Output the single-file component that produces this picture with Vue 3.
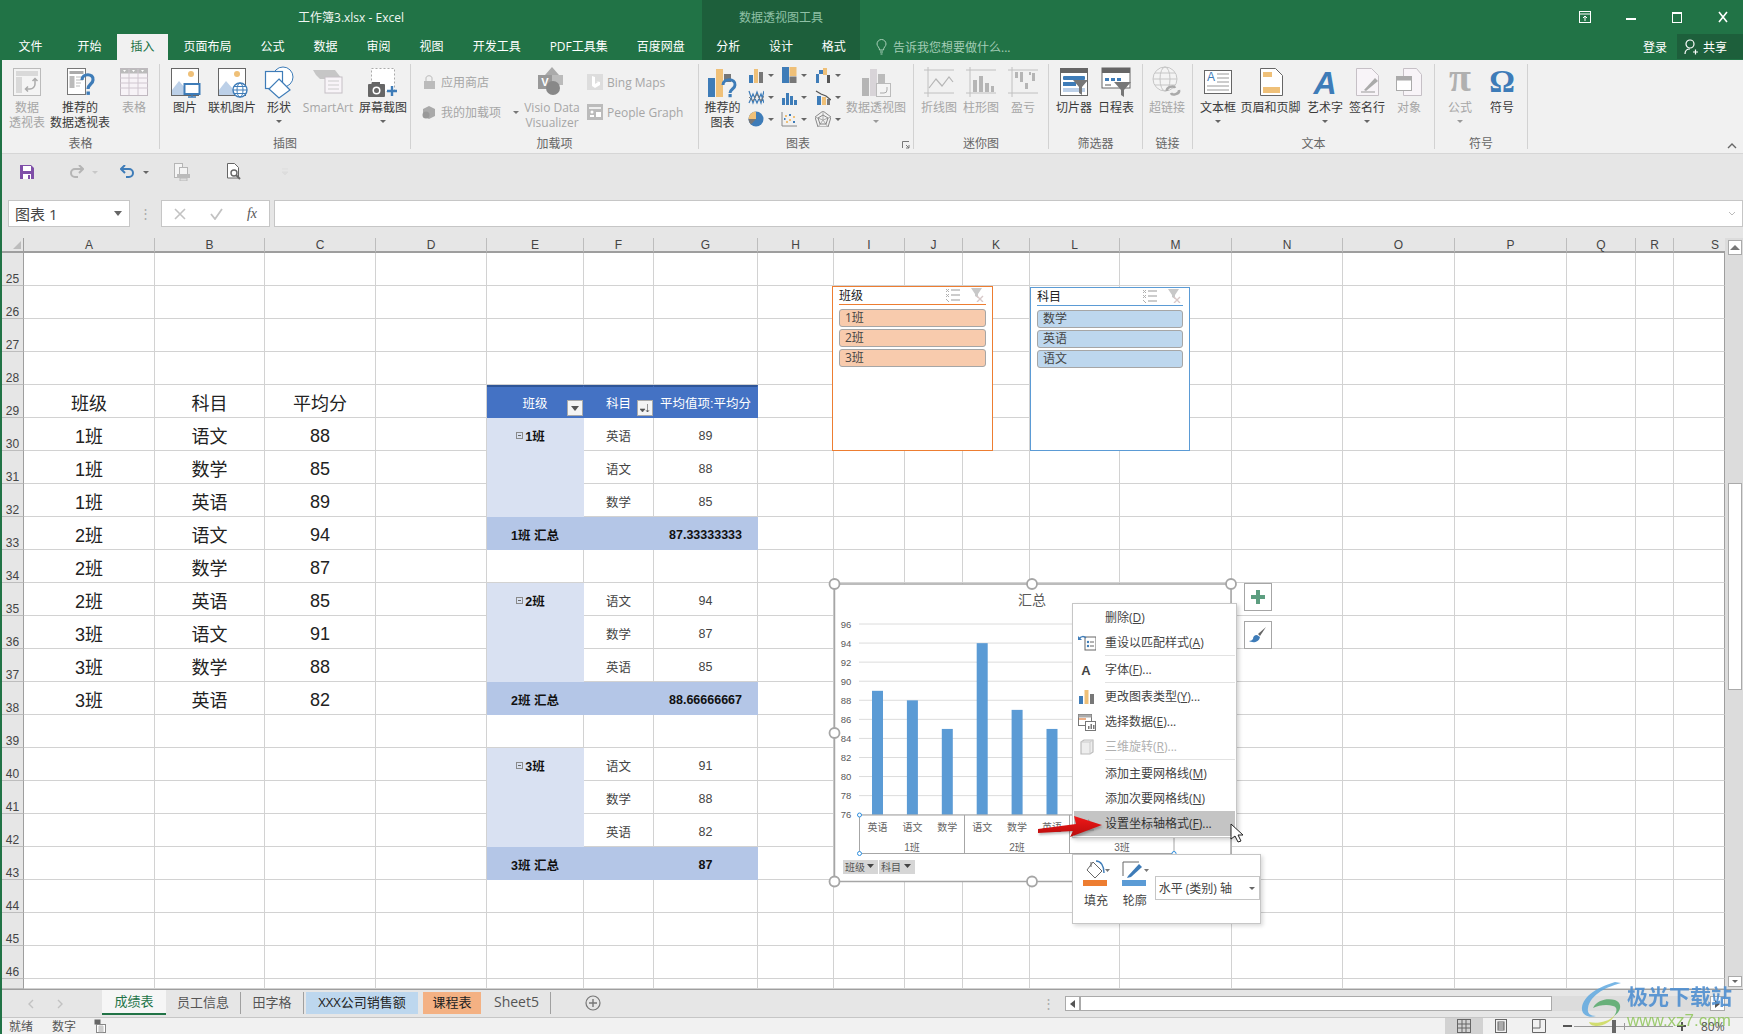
<script setup>
const mainTabs = [
  { t: '文件' }, { t: '开始', cls: 'second' }, { t: '插入', cls: 'active' }, { t: '页面布局' }, { t: '公式' },
  { t: '数据' }, { t: '审阅' }, { t: '视图' }, { t: '开发工具' }, { t: 'PDF工具集' }, { t: '百度网盘' }
]
const ctxTabs = ['分析', '设计', '格式']

const icons = {
  pivot: '<rect x="2.5" y="2.5" width="27" height="27" fill="#f4f4f4" stroke="#bbb"/><rect x="5" y="5" width="22" height="5" fill="#d9d9d9"/><rect x="5" y="11" width="6" height="16" fill="#d9d9d9"/><path d="M24 13v5a5 5 0 0 1-5 5h-4M21.500 15l2.500-2.500 2.500 2.500M17 20.500l-2.500 2.500 2.500 2.500" fill="none" stroke="#aaa" stroke-width="1.500"/>',
  rec: '<rect x="3.500" y="2.500" width="18" height="26" fill="#fff" stroke="#777"/><rect x="5.500" y="5" width="14" height="3" fill="#aaa"/><rect x="5.500" y="10" width="5" height="12" fill="#bbb"/><path d="M12 11h7M12 14h7M12 17h5M12 20h4" stroke="#bbb"/><path d="M18 14c0-7 12-7 11 0 0 4-5 4-5 9" fill="none" stroke="#3e7cb8" stroke-width="3.200"/><rect x="22.500" y="25.500" width="3.400" height="3.400" fill="#3e7cb8"/>',
  table: '<rect x="2.500" y="2.500" width="27" height="27" fill="#f7f3f7" stroke="#c0b8c0"/><rect x="2.500" y="2.500" width="27" height="5" fill="#bbb"/><path d="M2 12h28M2 17h28M2 22h28M11 3v26M20 3v26" stroke="#cfc6cf"/><path d="M5 4h3l-1.500 2zM14 4h3l-1.500 2zM23 4h3l-1.500 2z" fill="#fff"/>',
  picture: '<rect x="2.500" y="2.500" width="27" height="27" fill="#fff" stroke="#666"/><circle cx="22" cy="8" r="3" fill="#efc078"/><path d="M3 29v-5l7-9 7 8 4 6z" fill="#bcd0e8"/><rect x="15.500" y="18" width="15" height="10" fill="#fff" stroke="#3e7cb8" stroke-width="2"/><path d="M23 28v3M19 31h8" stroke="#3e7cb8" stroke-width="1.500"/>',
  online: '<rect x="2.500" y="2.500" width="27" height="27" fill="#fff" stroke="#666"/><circle cx="21" cy="8" r="3" fill="#efc078"/><path d="M3 29v-5l7-9 7 8 4 6z" fill="#bcd0e8"/><circle cx="24" cy="24" r="7" fill="#fff" stroke="#3e7cb8" stroke-width="1.400"/><ellipse cx="24" cy="24" rx="3" ry="7" fill="none" stroke="#3e7cb8"/><path d="M17 24h14M18 20.500h12M18 27.500h12" stroke="#3e7cb8"/>',
  shape: '<circle cx="20" cy="11" r="10" fill="#fff" stroke="#3e7cb8"/><rect x="2.500" y="5.500" width="17" height="17" fill="#fff" stroke="#3e7cb8" stroke-width="1.200"/><path d="M16 13l11 11-11 8-10-9z" fill="#fff" stroke="#3e7cb8" stroke-width="1.200"/>',
  smart: '<path d="M1 4h22l7 9H8l-4-4z" fill="#c6c6c6"/><rect x="13" y="11" width="17" height="16" fill="#f8f4f8" stroke="#c6c0c6"/><path d="M16 15h11M16 19h11M16 23h11" stroke="#ccc"/>',
  shot: '<rect x="4.500" y="2.500" width="23" height="23" fill="#fff" stroke="#aaa" stroke-dasharray="2 2"/><rect x="1" y="18" width="17" height="13" rx="1" fill="#666"/><rect x="5" y="16" width="8" height="3" fill="#666"/><circle cx="9.500" cy="24.500" r="4" fill="#fff"/><circle cx="9.500" cy="24.500" r="2.500" fill="#666"/><path d="M25 20v10M20 25h10" stroke="#3e7cb8" stroke-width="2.400"/>',
  visio: '<path d="M16 1l7 8v10l-7 8-7-8V9z" fill="#aaa"/><path d="M2 9h14v14H2z" fill="#999"/><path d="M16 9h11v10H16z" fill="#bbb"/><circle cx="17" cy="22" r="7" fill="#888"/><text x="9" y="20" font-size="11" font-weight="700" fill="#fff" text-anchor="middle" font-family="Liberation Sans">V</text>',
  chartrec: '<rect x="1" y="12" width="7" height="19" fill="#3e7cb8"/><rect x="9" y="3" width="7" height="28" fill="#efc078"/><rect x="17" y="8" width="7" height="8" fill="#777"/><path d="M16 19c0-7 13-7 12 0 0 4-5 4-5 8" fill="none" stroke="#3e7cb8" stroke-width="3"/><rect x="21.500" y="28" width="3.200" height="3.200" fill="#3e7cb8"/>',
  pivotchart: '<rect x="2" y="12" width="7" height="18" fill="#b5b5b5"/><rect x="10" y="3" width="7" height="27" fill="#d8d4d8"/><rect x="18" y="8" width="7" height="22" fill="#bbb"/><rect x="16.500" y="17.500" width="14" height="13" fill="#f4f4f4" stroke="#bbb"/><path d="M27 21v3a3 3 0 0 1-3 3h-4" fill="none" stroke="#aaa"/>',
  sline: '<path d="M1 4h30M1 27h30M5 1v30" stroke="#c0c0c0"/><path d="M6 22l7-9 6 7 7-9 4 5" fill="none" stroke="#b5b5b5" stroke-width="1.200"/>',
  scol: '<path d="M1 4h30M1 27h30M5 1v30" stroke="#c0c0c0"/><path d="M8 26V14h4v12zM14 26V10h4v16zM20 26V17h4v9zM26 26V20h3v6z" fill="#b5b5b5"/>',
  swin: '<path d="M1 4h30M1 27h30M5 1v30" stroke="#c0c0c0"/><path d="M8 6h3v6H8zM13 6h3v10h-3zM18 17h3v6h-3zM25 7h3v8h-3zM22 6h2v3h-2z" fill="#b5b5b5"/>',
  slicer: '<rect x="2.500" y="2.500" width="27" height="27" fill="#fff" stroke="#666"/><rect x="2" y="2" width="28" height="5" fill="#666"/><rect x="5" y="10" width="22" height="4" rx="1" fill="#3e7cb8"/><rect x="5" y="16" width="13" height="4" fill="#3e7cb8"/><rect x="5" y="22" width="22" height="4" fill="#bcd0e8"/><path d="M15 14h15l-6 7v8l-3-2v-6z" fill="#777"/>',
  timeline: '<rect x="2" y="2" width="28" height="20" fill="#fff" stroke="#666"/><rect x="2" y="2" width="28" height="5" fill="#666"/><path d="M5 12h4v3H5zM11 12h4v3h-4zM17 12h4v3h-4z" fill="#3e7cb8"/><path d="M5 18h6v2H5z" fill="#aaa"/><path d="M14 16h17l-7 8v7l-3-2v-5z" fill="#777"/>',
  link: '<circle cx="14" cy="13" r="12" fill="#f4f4f4" stroke="#c6c6c6"/><ellipse cx="14" cy="13" rx="5" ry="12" fill="none" stroke="#c6c6c6"/><path d="M2 13h24M4 7h20M4 19h20" stroke="#c6c6c6"/><path d="M16 25c-1-4 7-6 8-3M28 24c1 4-7 6-8 3" fill="none" stroke="#aaa" stroke-width="2.600"/>',
  textbox: '<rect x="2.500" y="4.500" width="27" height="23" fill="#fff" stroke="#666"/><text x="9" y="15" font-size="12" fill="#3e7cb8" text-anchor="middle" font-family="Liberation Sans">A</text><path d="M15 8h12M15 12h12M15 16h12M5 20h22M5 24h22" stroke="#999"/>',
  header: '<path d="M5.500 2.500h15l7 7v20h-22z" fill="#fff" stroke="#666"/><rect x="8" y="6" width="9" height="5" fill="#efc078"/><rect x="8" y="21" width="17" height="6" fill="#efc078"/>',
  art: '<text x="16" y="28" font-size="32" font-weight="700" font-style="italic" fill="#3e7cb8" text-anchor="middle" font-family="Liberation Sans">A</text>',
  sign: '<path d="M5.500 2.500h15l7 7v20h-22z" fill="#f8f4f8" stroke="#c6c0c6"/><path d="M10 26h14" stroke="#999"/><path d="M13 24l11-12 3 3-12 10z" fill="#aaa"/>',
  object: '<path d="M10.500 2.500h13l5 6v21h-18z" fill="#f8f4f8" stroke="#c6c0c6"/><rect x="3.500" y="10.500" width="15" height="14" fill="#fff" stroke="#aaa"/><rect x="3.500" y="10.500" width="15" height="4" fill="#aaa"/>',
  pi: '<text x="16" y="25" font-size="40" font-weight="700" fill="#b0b0b0" text-anchor="middle" font-family="Liberation Serif">π</text>',
  omega: '<text x="16" y="26" font-size="32" font-weight="700" fill="#3e7cb8" text-anchor="middle" font-family="Liberation Serif">Ω</text>',
  store: '<path d="M3 7h11v8H3z" fill="#bbb"/><path d="M5 7V4c0-3 6-3 6 0v3" fill="none" stroke="#bbb"/>',
  myadd: '<path d="M8 2l6 3v7l-6 3-6-3V5z" fill="#aaa"/><circle cx="5" cy="11" r="3.500" fill="#999"/>',
  bing: '<rect x="0" y="0" width="16" height="16" fill="#ddd"/><path d="M5 2l3 1v7l3-2-2-1 4 1v3l-5 3-3-2z" fill="#fff"/>',
  people: '<rect x="0" y="0" width="16" height="16" fill="#bbb"/><path d="M2 3h12v2H2z" fill="#eee"/><circle cx="5" cy="8" r="1.500" fill="#fff"/><path d="M3 13v-2h4v2zM9 8h5v5H9z" fill="#fff"/>',
  c_col: '<path d="M1 8h4v8H1z" fill="#3e7cb8"/><path d="M6 2h4v14H6z" fill="#efc078"/><path d="M11 5h4v11h-4z" fill="#777"/>',
  c_hier: '<rect x="1" y="0" width="7" height="16" fill="#3e7cb8"/><rect x="8.500" y="0" width="7" height="9" fill="#efc078"/><rect x="8.500" y="9.500" width="7" height="6.500" fill="#777"/>',
  c_water: '<path d="M1 16V7h3v9z" fill="#3e7cb8"/><path d="M4 7V3h4v4z" fill="#3e7cb8"/><path d="M8 1h4v7H8z" fill="#efc078"/><path d="M12 8h3v8h-3z" fill="#555"/>',
  c_line: '<path d="M1 2l4 12 4-11 4 11 3-12M1 14l4-9 4 9 4-9 3 9" fill="none" stroke="#3e7cb8" stroke-width="1.200"/><path d="M1 8l4 4 4-7 4 7 3-5" fill="none" stroke="#777"/>',
  c_stat: '<path d="M1 9h3v7H1zM5 4h3v12H5zM9 7h3v9H9zM13 11h3v5h-3z" fill="#3e7cb8"/>',
  c_combo: '<path d="M2 7h4v9H2z" fill="#3e7cb8"/><path d="M7 8h4v8H7z" fill="#efc078"/><path d="M12 10h3v6h-3z" fill="#777"/><path d="M1 2l5 3 5 2 5 4" fill="none" stroke="#555" stroke-width="1.200"/>',
  c_pie: '<circle cx="8" cy="8" r="7.500" fill="#3e7cb8"/><path d="M8 8H0.500A7.500 7.500 0 0 1 8 0.500z" fill="#efc078"/><path d="M8 8H0.500A7.500 7.500 0 0 0 3 13.500z" fill="#777"/>',
  c_scatter: '<path d="M1 1v14h15" fill="none" stroke="#888"/><path d="M4 4h2v2H4zM8 8h2v2H8zM12 5h2v2h-2zM5 10h2v2H5z" fill="#efc078"/><path d="M8 3h2v2H8zM12 10h2v2h-2zM3 7h1.500v2H3z" fill="#3e7cb8"/>',
  c_radar: '<path d="M8 0l8 6-3 10H3L0 6z" fill="none" stroke="#888"/><path d="M8 0v9M0 6l8 3 8-3M3 16l5-7 5 7" stroke="#aaa" fill="none"/><path d="M8 4l5 3-2 6H5L3 7z" fill="none" stroke="#888"/>',
  m_reset: '<rect x="7" y="3" width="11" height="13" fill="#fff" stroke="#666"/><circle cx="10" cy="8" r="1.200" fill="#3e7cb8"/><circle cx="10" cy="12" r="1.200" fill="#3e7cb8"/><path d="M12 8h4M12 12h4" stroke="#666"/><path d="M1 5c2-3 5-3 7-1" fill="none" stroke="#3e7cb8" stroke-width="1.500"/><path d="M0 2v4h4z" fill="#3e7cb8"/>',
  m_font: '<text x="8" y="14" font-size="13" fill="#444" text-anchor="middle" font-family="Liberation Sans" font-weight="700">A</text>',
  m_type: '<rect x="1" y="8" width="4" height="8" fill="#3e7cb8"/><rect x="6.500" y="2" width="4" height="14" fill="#efc078"/><rect x="12" y="6" width="4" height="10" fill="#777"/>',
  m_data: '<rect x="0.500" y="1.500" width="13" height="11" fill="#fff" stroke="#777"/><rect x="0.500" y="1.500" width="13" height="3" fill="#aaa"/><path d="M1 6h7" stroke="#e07b39" stroke-width="1.200"/><rect x="7.500" y="8.500" width="10" height="9" fill="#fff" stroke="#777"/><path d="M10 16v-3h1.500v3zM12.500 16v-5H14v5zM15 16v-4h1.500v4z" fill="#777"/>',
  m_3d: '<path d="M3 4l3-2h9v12l-3 2H3z" fill="#eee" stroke="#bbb" stroke-width="1.200"/><path d="M3 4h9v12M12 4l3-2" fill="none" stroke="#ccc"/>',
  m_axis: '<path d="M5 15V6l2-2v11zM10 15V4l2 2v9z" fill="#999"/><path d="M2 15h14" stroke="#999"/>'
}

const groups = [
  { label: '表格', w: 158, items: [
    { icon: 'pivot', w: 50, lines: ['数据', '透视表'], dis: true },
    { icon: 'rec', w: 56, lines: ['推荐的', '数据透视表'] },
    { icon: 'table', w: 52, lines: ['表格'], dis: true }
  ] },
  { label: '插图', w: 251, items: [
    { icon: 'picture', w: 50, lines: ['图片'] },
    { icon: 'online', w: 44, lines: ['联机图片'] },
    { icon: 'shape', w: 50, lines: ['形状'], caret: true },
    { icon: 'smart', w: 48, lines: ['SmartArt'], dis: true },
    { icon: 'shot', w: 62, lines: ['屏幕截图'], caret: true }
  ] },
  { label: '加载项', w: 288, pad: 10, items: [
    { kind: 'rows', w: 106, rows: [
      { icon: 'store', t: '应用商店' },
      { icon: 'myadd', t: '我的加载项', caret: true }
    ] },
    { icon: 'visio', w: 50, lines: ['Visio Data', 'Visualizer'], dis: true },
    { kind: 'rows', w: 110, ml: 10, rows: [
      { icon: 'bing', t: 'Bing Maps' },
      { icon: 'people', t: 'People Graph' }
    ] }
  ] },
  { label: '图表', w: 215, lr: 16, launcher: true, items: [
    { icon: 'chartrec', w: 47, lines: ['推荐的', '图表'] },
    { kind: 'grid', cells: ['c_col', 'c_hier', 'c_water', 'c_line', 'c_stat', 'c_combo', 'c_pie', 'c_scatter', 'c_radar'] },
    { icon: 'pivotchart', w: 60, lines: ['数据透视图'], caret: true, dis: true }
  ] },
  { label: '迷你图', w: 135, pad: 4, items: [
    { icon: 'sline', w: 42, lines: ['折线图'], dis: true },
    { icon: 'scol', w: 42, lines: ['柱形图'], dis: true },
    { icon: 'swin', w: 42, lines: ['盈亏'], dis: true }
  ] },
  { label: '筛选器', w: 94, pad: 4, items: [
    { icon: 'slicer', w: 42, lines: ['切片器'] },
    { icon: 'timeline', w: 42, lines: ['日程表'] }
  ] },
  { label: '链接', w: 50, items: [{ icon: 'link', w: 48, lines: ['超链接'], dis: true }] },
  { label: '文本', w: 242, items: [
    { icon: 'textbox', w: 50, lines: ['文本框'], caret: true },
    { icon: 'header', w: 55, lines: ['页眉和页脚'] },
    { icon: 'art', w: 54, lines: ['艺术字'], caret: true },
    { icon: 'sign', w: 30, lines: ['签名行'], caret: true },
    { icon: 'object', w: 54, lines: ['对象'], dis: true }
  ] },
  { label: '符号', w: 93, pad: 4, items: [
    { icon: 'pi', w: 42, lines: ['公式'], caret: true, dis: true },
    { icon: 'omega', w: 42, lines: ['符号'] }
  ] }
]

const columns = [
  ['A', 131], ['B', 110], ['C', 111], ['D', 111], ['E', 97], ['F', 70], ['G', 104], ['H', 76], ['I', 71], ['J', 58],
  ['K', 67], ['L', 90], ['M', 112], ['N', 111], ['O', 112], ['P', 112], ['Q', 69], ['R', 38], ['S', 51]
]
const gridStyle = {
  gridTemplateColumns: '22px ' + columns.map((c) => c[1] + 'px').join(' '),
  gridTemplateRows: '15px repeat(22, 33px) 10px'
}

const source = [
  ['1班', '语文', '88'], ['1班', '数学', '85'], ['1班', '英语', '89'],
  ['2班', '语文', '94'], ['2班', '数学', '87'], ['2班', '英语', '85'],
  ['3班', '语文', '91'], ['3班', '数学', '88'], ['3班', '英语', '82']
]
const cellMap = {}
function put(row, col, text, cls, extra) {
  const num = /^[\d.]+$/.test(text) ? ' num' : ''
  cellMap[row + col] = { text, cls: cls + num, ...extra }
}
put(29, 'A', '班级', 'big'); put(29, 'B', '科目', 'big'); put(29, 'C', '平均分', 'big')
source.forEach((r, i) => {
  put(30 + i, 'A', r[0], 'big'); put(30 + i, 'B', r[1], 'big'); put(30 + i, 'C', r[2], 'big')
})
put(29, 'E', '班级', 'phead', { dd: 'filter' })
put(29, 'F', '科目', 'phead', { dd: 'sort' })
put(29, 'G', '平均值项:平均分', 'phead')
const pivot = [
  { start: 30, name: '1班', rows: [['英语', '89'], ['语文', '88'], ['数学', '85']], avg: '87.33333333' },
  { start: 35, name: '2班', rows: [['语文', '94'], ['数学', '87'], ['英语', '85']], avg: '88.66666667' },
  { start: 40, name: '3班', rows: [['语文', '91'], ['数学', '88'], ['英语', '82']], avg: '87' }
]
pivot.forEach((p) => {
  p.rows.forEach((r, i) => {
    put(p.start + i, 'E', i === 0 ? p.name : '', 'prow', { minus: i === 0 })
    put(p.start + i, 'F', r[0], 'pdata')
    put(p.start + i, 'G', r[1], 'pdata')
  })
  const s = p.start + 3
  put(s, 'E', p.name + ' 汇总', 'psub')
  put(s, 'F', '', 'psub')
  put(s, 'G', p.avg, 'psub')
})
const rows = []
for (let r = 25; r <= 47; r++) rows.push(r)
function cell(r, c) { return cellMap[r + c] || { text: '', cls: '' } }

const slicers = [
  { cls: 's1', title: '班级', items: ['1班', '2班', '3班'] },
  { cls: 's2', title: '科目', items: ['数学', '英语', '语文'] }
]

const yAxis = [96, 94, 92, 90, 88, 86, 84, 82, 80, 78, 76].map((v, i) => ({ v, y: 624 + i * 19.07 }))
const bars = [
  { v: 89, t: '英语' }, { v: 88, t: '语文' }, { v: 85, t: '数学' }, { v: 94, t: '语文' }, { v: 87, t: '数学' },
  { v: 85, t: '英语' }, { v: 91 }, { v: 88 }, { v: 82 }
].map((b, i) => ({ ...b, x: 872 + i * 34.9, h: (b.v - 76) * 9.53 }))
const handles = [[834.5, 584], [1032, 584], [1231, 584], [834.5, 733], [834.5, 881.5], [1032, 881.5]]
const axisGroups = [{ t: '1班', x: 912 }, { t: '2班', x: 1017 }, { t: '3班', x: 1122 }]

const menu = [
  { t: '删除', k: 'D' },
  { t: '重设以匹配样式', k: 'A', icon: 'm_reset' },
  { sep: true },
  { t: '字体', k: 'F', more: true, icon: 'm_font' },
  { sep: true },
  { t: '更改图表类型', k: 'Y', more: true, icon: 'm_type' },
  { t: '选择数据', k: 'E', more: true, icon: 'm_data' },
  { t: '三维旋转', k: 'R', more: true, icon: 'm_3d', dis: true },
  { sep: true },
  { t: '添加主要网格线', k: 'M' },
  { t: '添加次要网格线', k: 'N' },
  { t: '设置坐标轴格式', k: 'F', more: true, icon: 'm_axis', hot: true }
]

const sheetTabs = [
  { t: '成绩表', w: 64, cls: 'on' },
  { t: '员工信息', w: 75, cls: 'sep' },
  { t: '田字格', w: 63, cls: 'sep' },
  { t: 'XXX公司销售额', w: 112, cls: 'blue', ml: 2 },
  { t: '课程表', w: 58, cls: 'orange', ml: 5 },
  { t: 'Sheet5', w: 68, cls: 'sep latin', ml: 2 }
]
</script>

<template>
  <div class="app">
    <header class="hdr">
      <div class="hleft">
        <div class="title">工作簿3.xlsx - Excel</div>
        <nav class="tabs">
          <span v-for="t in mainTabs" :key="t.t" class="tab" :class="t.cls">{{ t.t }}</span>
        </nav>
      </div>
      <div class="hctx">
        <div class="ctx-title">数据透视图工具</div>
        <nav class="tabs ctx-tabs">
          <span v-for="t in ctxTabs" :key="t" class="ctab">{{ t }}</span>
        </nav>
      </div>
      <div class="hright">
        <div class="winbtns">
          <svg width="12" height="14" viewBox="0 0 12 14"><rect x="0.500" y="1.500" width="11" height="11" fill="none" stroke="#fff"/><path d="M0 4h12M6 11V6M4 8l2-2 2 2" fill="none" stroke="#fff"/></svg>
          <svg width="12" height="14" viewBox="0 0 12 14"><path d="M1 9h10" stroke="#fff" stroke-width="2"/></svg>
          <svg width="12" height="14" viewBox="0 0 12 14"><rect x="1.500" y="2.500" width="9" height="10" fill="none" stroke="#fff"/><path d="M1 3h10" stroke="#fff" stroke-width="2"/></svg>
          <svg width="12" height="14" viewBox="0 0 12 14"><path d="M2 2l8 10M10 2l-8 10" stroke="#fff" stroke-width="1.600"/></svg>
        </div>
        <div class="tellrow">
          <svg class="bulb" width="11" height="16" viewBox="0 0 11 16"><path d="M3.500 11c0-3-2.500-3.500-2.500-6a4.500 4.500 0 0 1 9 0c0 2.500-2.500 3-2.500 6z" fill="none" stroke="#a9d0b9"/><path d="M4 13h3M4.500 15h2" stroke="#a9d0b9"/></svg>
          <span class="tell">告诉我您想要做什么...</span>
          <span class="login">登录</span>
          <span class="share">
            <svg width="14" height="16" viewBox="0 0 14 16"><circle cx="6" cy="5" r="4" fill="none" stroke="#fff" stroke-width="1.200"/><path d="M1 15c0-3 2-5 5-5M9 13h5M11.500 10.500v5" fill="none" stroke="#fff" stroke-width="1.200"/></svg>
            共享
          </span>
        </div>
      </div>
    </header>

    <div class="ribbon">
      <section v-for="g in groups" :key="g.label" class="rgroup" :style="{ width: g.w + 'px', paddingLeft: (g.pad || 0) + 'px' }">
        <div class="rbody">
          <template v-for="(it, i) in g.items" :key="i">
            <div v-if="it.kind === 'rows'" class="rows" :style="{ width: it.w + 'px', marginLeft: (it.ml || 0) + 'px' }">
              <div v-for="r in it.rows" :key="r.t" class="srow">
                <svg width="16" height="16" viewBox="0 0 16 16" v-html="icons[r.icon]"></svg>
                <span>{{ r.t }}</span>
                <i v-if="r.caret" class="caret caret-row"></i>
              </div>
            </div>
            <div v-else-if="it.kind === 'grid'" class="cgrid">
              <div v-for="c in it.cells" :key="c" class="ccell">
                <svg width="16" height="16" viewBox="0 0 16 16" v-html="icons[c]"></svg>
                <i class="caret dark"></i>
              </div>
            </div>
            <div v-else class="rbtn" :class="{ dis: it.dis }" :style="{ width: it.w + 'px' }">
              <svg width="32" height="32" viewBox="0 0 32 32" v-html="icons[it.icon]"></svg>
              <span v-for="l in it.lines" :key="l" class="rline">{{ l }}</span>
              <i v-if="it.caret" class="caret big"></i>
            </div>
          </template>
        </div>
        <div class="rlabel" :style="{ marginLeft: -(g.pad || 0) + 'px', paddingRight: (g.lr || 0) + 'px' }">
          {{ g.label }}
          <svg v-if="g.launcher" class="launcher" width="8" height="8" viewBox="0 0 8 8"><path d="M0.500 7V0.500H7M4 4l3 3M7 4v3H4" fill="none" stroke="#777"/></svg>
        </div>
      </section>
      <svg class="collapse" width="10" height="7" viewBox="0 0 10 7"><path d="M1 6l4-4 4 4" fill="none" stroke="#666" stroke-width="1.400"/></svg>
    </div>

    <div class="qat">
      <svg class="q1" width="16" height="16" viewBox="0 0 16 16"><path d="M1 1h11l3 3v11H1z" fill="#7f4fa8"/><rect x="4" y="2" width="8" height="5" fill="#fff"/><rect x="4" y="10" width="8" height="5" fill="#fff"/><rect x="9" y="11" width="2" height="4" fill="#7f4fa8"/></svg>
      <svg class="q2" width="15" height="14" viewBox="0 0 15 14"><path d="M14 4H6a4 4 0 0 0 0 8h3M10 0l4 4-4 4" fill="none" stroke="#b5b5b5" stroke-width="2"/></svg>
      <i class="caret faint q-c"></i>
      <svg class="q3" width="15" height="14" viewBox="0 0 15 14"><path d="M1 4h8a4 4 0 0 1 0 8H6M5 0L1 4l4 4" fill="none" stroke="#3e7cb8" stroke-width="2"/></svg>
      <i class="caret q-c dark"></i>
      <svg class="q4" width="16" height="18" viewBox="0 0 16 18"><rect x="0.500" y="0.500" width="8" height="14" fill="#f4f4f4" stroke="#b5b5b5"/><rect x="5.500" y="4.500" width="8" height="10" fill="#f4f4f4" stroke="#b5b5b5"/><rect x="3" y="11" width="13" height="4" fill="#bbb"/><rect x="6" y="15" width="7" height="3" fill="#ddd" stroke="#bbb"/></svg>
      <svg class="q5" width="15" height="18" viewBox="0 0 15 18"><path d="M0.500 0.500h7l4 4V15h-11z" fill="#fff" stroke="#666"/><circle cx="7" cy="10" r="3" fill="#fff" stroke="#666" stroke-width="1.400"/><path d="M9 12l4 4" stroke="#666" stroke-width="2"/></svg>
      <svg class="q6" width="8" height="8" viewBox="0 0 8 8"><path d="M1 1h6M1 4h6l-3 3z" fill="#ddd" stroke="#ddd"/></svg>
    </div>

    <div class="fbar">
      <div class="namebox"><span>图表 1</span><i class="caret dark nb-c"></i></div>
      <div class="fdots">⋮</div>
      <div class="fbtns">
        <svg width="12" height="12" viewBox="0 0 12 12"><path d="M1 1l10 10M11 1L1 11" stroke="#c2c2c2" stroke-width="1.600"/></svg>
        <svg width="13" height="12" viewBox="0 0 13 12"><path d="M1 6l4 5 7-10" fill="none" stroke="#c2c2c2" stroke-width="1.800"/></svg>
        <span class="fx">fx</span>
      </div>
      <div class="finput"><svg width="8" height="6" viewBox="0 0 8 6"><path d="M1 1l3 3 3-3" fill="none" stroke="#bbb"/></svg></div>
    </div>

    <div class="wrap">
      <div class="sheet" :style="gridStyle">
        <div class="corner"><svg width="10" height="10" viewBox="0 0 10 10"><path d="M9 1v8H1z" fill="#bdbdbd"/></svg></div>
        <div v-for="c in columns" :key="c[0]" class="chead">{{ c[0] }}</div>
        <template v-for="r in rows" :key="r">
          <div class="rhead">{{ r < 47 ? r : '' }}</div>
          <div v-for="c in columns" :key="c[0]" class="cell" :class="cell(r, c[0]).cls">
            <svg v-if="cell(r, c[0]).minus" class="minus" width="7" height="7" viewBox="0 0 7 7"><rect x="0.500" y="0.500" width="6" height="6" fill="none" stroke="#8a8a8a"/><path d="M2 3.500h3" stroke="#666"/></svg>
            {{ cell(r, c[0]).text }}
            <span v-if="cell(r, c[0]).dd" class="dd">
              <svg v-if="cell(r, c[0]).dd === 'filter'" width="8" height="5" viewBox="0 0 8 5"><path d="M0 0h8L4 5z" fill="#555"/></svg>
              <svg v-else width="11" height="11" viewBox="0 0 11 11"><path d="M0 6h5L2.500 9zM7.500 1v8M6 7.500l1.500 1.500L9 7.500" fill="#555" stroke="#555" stroke-width="0.600"/></svg>
            </span>
          </div>
        </template>
      </div>
      <div class="vbar">
        <div class="vbtn"><i class="caret up"></i></div>
        <div class="vthumb"></div>
        <div class="vbtn last"><i class="caret dark"></i></div>
      </div>
    </div>

    <div class="tabbar">
      <div class="nav">
        <svg width="6" height="10" viewBox="0 0 6 10"><path d="M5 1L1 5l4 4" fill="none" stroke="#c2c2c2" stroke-width="1.400"/></svg>
        <svg width="6" height="10" viewBox="0 0 6 10"><path d="M1 1l4 4-4 4" fill="none" stroke="#c2c2c2" stroke-width="1.400"/></svg>
      </div>
      <div v-for="t in sheetTabs" :key="t.t" class="stab" :class="t.cls" :style="{ width: t.w + 'px', marginLeft: (t.ml || 0) + 'px' }">{{ t.t }}</div>
      <svg class="addsheet" width="16" height="16" viewBox="0 0 16 16"><circle cx="8" cy="8" r="7" fill="none" stroke="#777" stroke-width="1.200"/><path d="M4 8h8M8 4v8" stroke="#777" stroke-width="1.400"/></svg>
      <div class="hdots">⋮</div>
      <div class="hbar">
        <div class="hbtn"><svg width="5" height="8" viewBox="0 0 5 8"><path d="M5 0v8L0 4z" fill="#555"/></svg></div>
        <div class="hthumb"></div>
        <div class="hbtn end"><svg width="5" height="8" viewBox="0 0 5 8"><path d="M0 0v8l5-4z" fill="#555"/></svg></div>
      </div>
    </div>

    <footer class="status">
      <span class="st1">就绪</span>
      <span class="st2">数字</span>
      <svg class="st3" width="12" height="14" viewBox="0 0 12 14"><rect x="0.500" y="0.500" width="6" height="5" fill="#666"/><rect x="2.500" y="5.500" width="9" height="8" fill="#fff" stroke="#888"/><path d="M4 8h6M4 10h6M4 12h6M6 6v8M8 6v8" stroke="#aaa" stroke-width="0.700"/></svg>
      <div class="views">
        <div class="view on"><svg width="14" height="14" viewBox="0 0 14 14"><rect x="0.500" y="0.500" width="13" height="13" fill="none" stroke="#666"/><path d="M5 0v14M9 0v14M0 5h14M0 9h14" stroke="#666"/></svg></div>
        <div class="view"><svg width="12" height="14" viewBox="0 0 12 14"><rect x="0.500" y="0.500" width="11" height="13" fill="none" stroke="#666"/><rect x="3" y="3" width="6" height="8" fill="none" stroke="#666"/><path d="M3 5h6M3 7h6M3 9h6" stroke="#666"/></svg></div>
        <div class="view"><svg width="14" height="14" viewBox="0 0 14 14"><path d="M0.500 13.500V0.500h13v13zM0 9h8V0" fill="none" stroke="#666"/></svg></div>
      </div>
      <div class="zoom">
        <span class="zm"></span>
        <div class="ztrack"><i class="ztick"></i><i class="zthumb"></i></div>
        <span class="zp"></span>
      </div>
      <span class="zpct">80%</span>
    </footer>

    <aside v-for="s in slicers" :key="s.cls" class="slicer" :class="s.cls">
      <div class="shead">
        <span>{{ s.title }}</span>
        <svg width="14" height="14" viewBox="0 0 14 14"><path d="M5 2h9M5 7h9M5 12h9" stroke="#9a9a9a" stroke-width="1.200"/><path d="M0 1l3 3M3 1L0 4M0 6l3 3M3 6L0 9M0 11l3 3" stroke="#b0b0b0"/></svg>
        <svg width="14" height="14" viewBox="0 0 14 14"><path d="M1 0h11L8 6v4L5 8V6z" fill="#c8c8c8"/><path d="M7 8l6 6M13 8l-6 6" stroke="#d8c8c8" stroke-width="1.400"/></svg>
      </div>
      <div v-for="it in s.items" :key="it" class="sitem">{{ it }}</div>
    </aside>

    <svg class="chart" width="414" height="314" viewBox="826 576 414 314">
      <rect x="834.500" y="584" width="396.500" height="297.500" fill="#fff" stroke="#a6a6a6" stroke-width="1.500"/>
      <text x="1032" y="605" font-size="14" fill="#595959" text-anchor="middle" class="ctext">汇总</text>
      <g v-for="t in yAxis" :key="t.v">
        <line x1="859" :y1="t.y" x2="1215" :y2="t.y" stroke="#dcdcdc"/>
        <text x="846" :y="t.y + 3.500" font-size="9.500" fill="#595959" text-anchor="middle" class="ctext">{{ t.v }}</text>
      </g>
      <g v-for="b in bars" :key="b.x">
        <rect :x="b.x" :y="814.700 - b.h" width="11" :height="b.h" fill="#5b9bd5"/>
        <text v-if="b.t" :x="b.x + 5.500" y="831" font-size="10" fill="#666" text-anchor="middle" class="ctext">{{ b.t }}</text>
      </g>
      <path d="M859.500 815V853.500H1174V838M859.500 815H1174M964.500 815V853.500M1069.500 815V853.500" fill="none" stroke="#a6a6a6"/>
      <text v-for="g in axisGroups" :key="g.t" :x="g.x" y="851" font-size="10" fill="#666" text-anchor="middle" class="ctext">{{ g.t }}</text>
      <circle cx="859.500" cy="815" r="2" fill="#fff" stroke="#2e8fe0"/>
      <circle cx="859.500" cy="853.500" r="2" fill="#fff" stroke="#2e8fe0"/>
      <circle cx="1174" cy="853.500" r="2" fill="#fff" stroke="#2e8fe0"/>
      <g>
        <rect x="843" y="860" width="35" height="14" fill="#d6d6d6"/>
        <rect x="879" y="860" width="36" height="14" fill="#d6d6d6"/>
        <text x="855" y="871" font-size="10" fill="#555" text-anchor="middle" class="ctext">班级</text>
        <text x="891" y="871" font-size="10" fill="#555" text-anchor="middle" class="ctext">科目</text>
        <path d="M867 864h7l-3.500 4zM904 864h7l-3.500 4z" fill="#444"/>
      </g>
      <circle v-for="h in handles" :key="h[0] + '-' + h[1]" :cx="h[0]" :cy="h[1]" r="5" fill="#fff" stroke="#a6a6a6" stroke-width="1.800"/>
    </svg>

    <div class="sidebtn plus">
      <svg width="14" height="14" viewBox="0 0 14 14"><path d="M0 5h5V0h4v5h5v4H9v5H5V9H0z" fill="#5d9e80"/></svg>
    </div>
    <div class="sidebtn brush">
      <svg width="18" height="18" viewBox="0 0 18 18"><path d="M17 1L9 8l2 2z" fill="#666"/><path d="M8 9c-3 0-4 2-4 4-1 1-2 2-4 2 3 2 10 2 11-4z" fill="#3e7cb8"/></svg>
    </div>

    <div class="menu">
      <template v-for="(m, i) in menu" :key="i">
        <div v-if="m.sep" class="msep"></div>
        <div v-else class="mitem" :class="{ hot: m.hot, dis: m.dis }">
          <svg class="micon" width="18" height="18" viewBox="0 0 18 18" v-html="m.icon ? icons[m.icon] : ''"></svg>
          <span class="mtext">{{ m.t }}(<u>{{ m.k }}</u>){{ m.more ? '...' : '' }}</span>
        </div>
      </template>
    </div>

    <div class="mini">
      <div class="mcol">
        <svg width="28" height="26" viewBox="0 0 28 26"><path d="M10 2l9 9-7 7-8-8z" fill="#fff" stroke="#666"/><path d="M8 7V2" stroke="#666"/><path d="M13 1c5 0 8 5 8 12" fill="none" stroke="#3e7cb8" stroke-width="1.400"/><rect x="0" y="20" width="24" height="6" fill="#ed7d31"/><path d="M22 9h5l-2.500 3z" fill="#777"/></svg>
        <span>填充</span>
      </div>
      <div class="mcol">
        <svg width="28" height="26" viewBox="0 0 28 26"><path d="M1 16V2h16" fill="none" stroke="#666"/><path d="M6 16L17 4l3 3L9 17l-4 1z" fill="#3e7cb8"/><rect x="0" y="20" width="24" height="6" fill="#5b9bd5"/><path d="M22 9h5l-2.500 3z" fill="#777"/></svg>
        <span>轮廓</span>
      </div>
      <div class="msel"><span>水平 (类别) 轴</span><i class="caret dark"></i></div>
    </div>

    <svg class="arrow" width="72" height="30" viewBox="0 0 72 30">
      <defs>
        <linearGradient id="ar" x1="0" y1="0" x2="0" y2="1"><stop offset="0" stop-color="#f01818"/><stop offset="1" stop-color="#b80c0c"/></linearGradient>
      </defs>
      <path d="M2 19l38-5 -2-8 28 9-32 12 3-6-35 2z" fill="url(#ar)"/>
    </svg>

    <svg class="cursor" width="14" height="20" viewBox="0 0 14 20"><path d="M1 1v15l4-3 3 6 3-1-3-6h5z" fill="#fff" stroke="#222"/></svg>

    <div class="wm">
      <svg class="wm-logo" width="44" height="44" viewBox="0 0 44 44">
        <path d="M34 0C14 6 0 16 1 28c1 6 8 8 14 6-6 0-9-3-8-8C9 14 22 6 40 1z" fill="#58a5e0" opacity="0.800"/>
        <path d="M12 26c4-8 14-10 22-8 8 3 6 12-1 16 3-4 4-9-1-10-6-2-14-1-20 2z" fill="#55a868" opacity="0.850"/>
        <path d="M8 40c8 2 20 0 26-7-3 6-11 11-18 11-4 0-7-1-8-4z" fill="#c9d84f" opacity="0.800"/>
      </svg>
      <div class="wm-text">
        <div class="wm-cn">极光下载站</div>
        <div class="wm-url">www.xz7.com</div>
      </div>
    </div>
  </div>
</template>

<style>
html, body { margin: 0; padding: 0; background: #fff; overflow: hidden; }
</style>

<style scoped>
.app {
  position: relative;
  width: 1743px;
  height: 1034px;
  box-sizing: border-box;
  border-left: 2px solid #217346;
  overflow: hidden;
  background: #e6e6e6;
  font-family: "Open Sans", "Noto Sans CJK SC", sans-serif;
  font-size: 12px;
  color: #444;
}
i { display: block; }

.hdr { display: flex; height: 60px; background: #217346; color: #fff; margin-left: -2px; }
.hleft { width: 702px; flex: none; }
.title { height: 34px; line-height: 36px; text-align: center; font-size: 12px; color: #f0f6f2; }
.tabs { display: flex; height: 26px; padding-left: 4px; }
.tab { padding: 0 14.5px; line-height: 26px; font-size: 12px; color: #fff; white-space: nowrap; }
.tab.second { margin-left: 6px; }
.tab.active { background: #f1f1f1; color: #217346; padding: 0 13.5px; margin: 0 1px; }
.hctx { width: 158px; flex: none; background: #1d5f3b; }
.ctx-title { height: 34px; line-height: 36px; text-align: center; color: #8fc1a6; }
.ctx-tabs { padding: 0; }
.ctab { width: 53px; text-align: center; line-height: 26px; }
.hright { flex: 1; min-width: 0; }
.winbtns { height: 34px; display: flex; align-items: center; justify-content: flex-end; gap: 34px; padding-right: 14px; }
.tellrow { height: 26px; display: flex; align-items: center; padding-left: 16px; }
.bulb { margin-right: 6px; }
.tell { color: #a3ccb5; font-size: 12px; }
.login { margin-left: auto; margin-right: 10px; }
.share { width: 66px; height: 25px; box-sizing: border-box; background: #1d5f3b; display: flex; align-items: center; gap: 5px; padding-left: 7px; margin-top: -1px; }

.ribbon { display: flex; height: 94px; box-sizing: border-box; padding-top: 4px; background: #f1f1f1; border-bottom: 1px solid #d6d6d6; position: relative; }
.rgroup { height: 85px; flex: none; box-sizing: border-box; border-right: 1px solid #d2d2d2; position: relative; display: flex; flex-direction: column; }
.rbody { height: 73px; display: flex; }
.rlabel { height: 12px; line-height: 14px; text-align: center; color: #666; white-space: nowrap; }
.launcher { position: absolute; right: 3px; bottom: 0; }
.rbtn { display: flex; flex-direction: column; align-items: center; padding-top: 2px; flex: none; box-sizing: border-box; color: #3a3a3a; }
.rbtn.dis { color: #a6a6a6; }
.rline { line-height: 15px; white-space: nowrap; }
.rbtn svg { margin-bottom: 2px; flex: none; overflow: visible; }
.caret { width: 0; height: 0; border-left: 3px solid transparent; border-right: 3px solid transparent; border-top: 3px solid #9a9a9a; }
.caret.big { margin-top: 5px; }
.caret.dark { border-top-color: #666; }
.caret.faint { border-top-color: #c8c8c8; }
.caret.up { border-top: 0; border-bottom: 5px solid #777; border-left-width: 5px; border-right-width: 5px; }
.rbtn:not(.dis) .caret.big { border-top-color: #666; }
.rows { padding-top: 3px; color: #a6a6a6; flex: none; }
.srow { height: 30px; display: flex; align-items: center; gap: 4px; white-space: nowrap; }
.caret-row { margin-left: 8px; border-top-color: #777; }
.cgrid { display: grid; grid-template-columns: repeat(3, 33.3px); grid-auto-rows: 22px; width: 100px; flex: none; }
.ccell { display: flex; align-items: center; padding-left: 2px; gap: 4px; }
.collapse { position: absolute; left: 1725px; top: 82px; }

.qat { height: 36px; display: flex; align-items: center; }
.q1 { margin-left: 17px; }
.q2 { margin-left: 34px; }
.q-c { margin-left: 8px; }
.q3 { margin-left: 22px; }
.q4 { margin-left: 25px; }
.q5 { margin-left: 37px; }
.q6 { margin-left: 39px; }

.fbar { height: 27px; margin: 10px 0 11px; display: flex; }
.namebox { width: 122px; margin-left: 6px; box-sizing: border-box; background: #fff; border: 1px solid #c6c6c6; display: flex; align-items: center; padding: 0 6px; justify-content: space-between; font-size: 15px; color: #444; }
.nb-c { border-left-width: 4px; border-right-width: 4px; border-top-width: 5px; margin-right: 1px; }
.fdots { width: 31px; text-align: center; line-height: 27px; color: #aaa; font-size: 13px; }
.fbtns { width: 109px; box-sizing: border-box; background: #fff; border: 1px solid #c6c6c6; display: flex; align-items: center; justify-content: space-between; padding: 0 12px; }
.fx { font-family: "Liberation Serif", serif; font-style: italic; font-size: 14px; color: #555; }
.finput { flex: 1; margin-left: 4px; background: #fff; border: 1px solid #c6c6c6; display: flex; align-items: center; justify-content: flex-end; padding-right: 6px; }

.wrap { display: flex; height: 751px; }
.sheet { display: grid; width: 1723px; height: 751px; overflow: hidden; background: #fff; box-sizing: border-box; font-family: "Liberation Sans", "Noto Sans CJK SC", sans-serif; }
.corner { background: #e6e6e6; border-right: 1px solid #9e9e9e; border-bottom: 2px solid #9e9e9e; box-sizing: border-box; display: flex; align-items: flex-end; justify-content: flex-end; padding: 0 1px 1px 0; }
.chead { background: #e6e6e6; border-right: 1px solid #bdbdbd; border-bottom: 2px solid #9e9e9e; box-sizing: border-box; text-align: center; line-height: 15px; color: #444; font-size: 12px; }
.chead:nth-child(20) { border-right: 0; text-align: right; padding-right: 6px; }
.rhead { background: #e6e6e6; border-right: 1px solid #9e9e9e; border-bottom: 1px solid #bdbdbd; box-sizing: border-box; display: flex; align-items: flex-end; justify-content: center; font-size: 12px; line-height: 12px; color: #444; }
.cell { box-sizing: border-box; padding-top: 2px; border-right: 1px solid #d2d2d2; border-bottom: 1px solid #d2d2d2; display: flex; align-items: center; justify-content: center; gap: 2px; position: relative; white-space: nowrap; color: #333; }
.sheet > .cell:nth-child(20n) { border-right: 1px solid #9e9e9e; }
.cell.num { padding-top: 4px; }
.cell.big { font-size: 18px; color: #222; }
.cell.phead { background: #4472c4; color: #fff; font-size: 12.5px; border-color: #4472c4; border-top: 2px solid #2f5597; padding-top: 0; }
.cell.prow { background: #d9e1f2; border-color: #d9e1f2; font-weight: 700; font-size: 12.5px; color: #111; }
.cell.pdata { font-size: 12.5px; color: #444; }
.cell.psub { background: #b4c6e7; border-color: #b4c6e7; font-size: 12.5px; font-weight: 700; color: #111; }
.minus { flex: none; margin-left: -9px; }
.dd { position: absolute; right: 0; bottom: 1px; width: 16px; height: 16px; box-sizing: border-box; background: #f4f4f4; border: 1px solid #aaa; display: flex; align-items: center; justify-content: center; }

.vbar { width: 18px; background: #dcdcdc; display: flex; flex-direction: column; padding: 2px 1px 2px 3px; box-sizing: border-box; }
.vbtn { height: 15px; box-sizing: border-box; background: #fff; border: 1px solid #aaa; display: flex; align-items: center; justify-content: center; }
.vbtn.last { margin-top: auto; height: 11px; }
.vthumb { height: 207px; margin-top: 228px; box-sizing: border-box; background: #fff; border: 1px solid #aaa; }

.tabbar { height: 28px; display: flex; align-items: flex-start; background: #e6e6e6; border-top: 1px solid #9e9e9e; box-sizing: border-box; font-size: 13px; }
.nav { width: 100px; height: 27px; flex: none; display: flex; align-items: center; gap: 23px; padding-left: 26px; box-sizing: border-box; }
.stab { height: 22px; margin-top: 2px; padding-bottom: 3px; flex: none; box-sizing: border-box; display: flex; align-items: center; justify-content: center; color: #555; white-space: nowrap; }
.stab.on { height: 25px; margin-top: 0; padding-bottom: 2px; background: #f6f6f6; color: #217346; border-bottom: 2px solid #217346; }
.stab.sep { border-right: 1px solid #a0a0a0; }
.stab.latin { font-size: 14px; }
.stab.blue { background: #bdd7ee; color: #222; }
.stab.orange { background: #f4b183; color: #222; }
.addsheet { margin: 5px 0 0 34px; flex: none; }
.hdots { margin-left: auto; line-height: 26px; color: #aaa; width: 34px; text-align: center; }
.hbar { width: 660px; margin: 6px 18px 0 0; height: 15px; flex: none; box-sizing: border-box; background: #dcdcdc; display: flex; }
.hbtn { width: 15px; height: 15px; box-sizing: border-box; background: #fff; border: 1px solid #aaa; display: flex; align-items: center; justify-content: center; }
.hbtn.end { margin-left: auto; }
.hthumb { width: 472px; box-sizing: border-box; background: #fff; border: 1px solid #aaa; }

.status { height: 17px; display: flex; align-items: center; background: #f1f1f1; border-top: 1px solid #c6c6c6; box-sizing: border-box; color: #555; position: relative; }
.st1 { margin-left: 7px; }
.st2 { margin-left: 19px; }
.st3 { margin-left: 18px; }
.views { margin-left: auto; display: flex; height: 16px; }
.view { width: 37.500px; display: flex; align-items: center; justify-content: center; }
.view.on { background: #d2d2d2; }
.zoom { display: flex; align-items: center; margin-left: 5.500px; width: 123px; height: 16px; flex: none; }
.zm, .zp { display: block; position: relative; width: 9px; height: 2px; background: #555; flex: none; }
.zp::after { content: ""; position: absolute; left: 3.500px; top: -3.500px; width: 2px; height: 9px; background: #555; }
.ztrack { position: relative; width: 99px; height: 1px; margin: 0 4px 0 2px; background: #9a9a9a; flex: none; }
.ztick { position: absolute; left: 50px; top: -3px; width: 1px; height: 7px; background: #9a9a9a; }
.zthumb { position: absolute; left: 38px; top: -6px; width: 4px; height: 13px; background: #666; }
.zpct { width: 42px; margin-left: 15px; position: relative; z-index: 5; box-sizing: border-box; flex: none; }

.slicer { position: absolute; box-sizing: border-box; background: #fff; padding: 0 6px; font-family: "Open Sans", "Noto Sans CJK SC", sans-serif; }
.s1 { left: 830px; top: 286px; width: 161px; height: 165px; border: 1px solid #ed7d31; --line: #ed7d31; --fill: #f8cbad; }
.s2 { left: 1028px; top: 287px; width: 160px; height: 164px; border: 1px solid #5b9bd5; --line: #5b9bd5; --fill: #bdd7ee; }
.shead { height: 18px; box-sizing: border-box; border-bottom: 1px solid var(--line); display: flex; align-items: center; color: #222; gap: 10px; margin-bottom: 4px; padding: 0 2px 2px 0; }
.shead span { margin-right: auto; }
.sitem { height: 18px; box-sizing: border-box; background: var(--fill); border: 1px solid #a6a6a6; border-radius: 3px; margin-bottom: 2px; padding-left: 5px; line-height: 16px; color: #444; }

.chart { position: absolute; left: 824px; top: 576px; }
.ctext { font-family: "Liberation Sans", "Noto Sans CJK SC", sans-serif; }

.sidebtn { position: absolute; left: 1242px; width: 28px; height: 28px; box-sizing: border-box; background: #fff; border: 1px solid #a6a6a6; display: flex; align-items: center; justify-content: center; }
.plus { top: 583px; }
.brush { top: 621px; }

.menu { position: absolute; left: 1070px; top: 603px; width: 165px; height: 235px; box-sizing: border-box; background: #fff; border: 1px solid #c6c6c6; padding: 1px; box-shadow: 2px 2px 4px rgba(0, 0, 0, 0.18); color: #444; }
.mitem { height: 25px; display: flex; align-items: center; white-space: nowrap; }
.mtext { padding-bottom: 2px; }
.micon { margin: 0 9px 0 4px; flex: none; }
.mitem.hot { background: #c4c4c4; color: #333; }
.mitem.dis { color: #b0b0b0; }
.msep { height: 2px; margin-left: 31px; border-top: 1px solid #e2e2e2; box-sizing: border-box; }

.mini { position: absolute; left: 1070px; top: 854px; width: 189px; height: 70px; box-sizing: border-box; background: #fff; border: 1px solid #c6c6c6; box-shadow: 2px 2px 4px rgba(0, 0, 0, 0.15); display: flex; padding-left: 10px; gap: 10px; }
.mcol { display: flex; flex-direction: column; align-items: flex-start; width: 29px; padding-top: 5px; color: #444; }
.mcol span { margin-top: 8px; line-height: 14px; padding-left: 1px; }
.msel { width: 106px; height: 24px; margin: 21px 0 0 -6px; box-sizing: border-box; border: 1px solid #c6c6c6; display: flex; align-items: center; justify-content: space-between; padding: 0 4px 0 3px; font-size: 12px; white-space: nowrap; color: #444; }

.arrow { position: absolute; left: 1034px; top: 810px; filter: drop-shadow(1px 2px 1px rgba(0, 0, 0, 0.25)); }
.cursor { position: absolute; left: 1228px; top: 823px; }

.wm { position: absolute; left: 1579px; top: 982px; display: flex; gap: 2px; }
.wm-text { font-family: "Liberation Sans", "Noto Sans CJK SC", sans-serif; white-space: nowrap; }
.wm-cn { font-size: 21px; line-height: 26px; margin-top: 2px; font-weight: 700; color: #4f8fd0; opacity: 0.9; }
.wm-url { font-size: 17px; line-height: 22px; color: #8fc65a; opacity: 0.85; }
</style>
